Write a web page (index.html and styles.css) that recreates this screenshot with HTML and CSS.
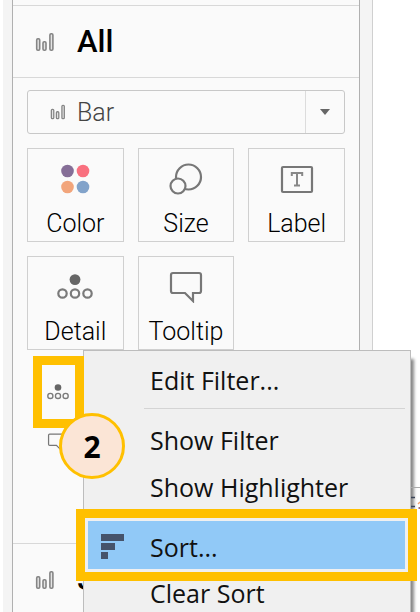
FILE: index.html
```html
<!DOCTYPE html>
<html lang="en">
<head>
<meta charset="utf-8">
<title>Marks</title>
<link rel="stylesheet" href="styles.css">
</head>
<body>
<svg class="defs" aria-hidden="true">
  <symbol id="bars" viewBox="0 0 20 20">
    <g fill="#e4e4e4" stroke="#858585" stroke-width="1.6">
      <rect x="1.7" y="6.7" width="3" height="11.6" rx="1.2"/>
      <rect x="8" y="9.7" width="3" height="8.6" rx="1.2"/>
      <rect x="14.9" y="1.7" width="3" height="16.6" rx="1.2"/>
    </g>
  </symbol>
  <symbol id="detail" viewBox="0 0 36 26">
    <circle cx="18" cy="5.6" r="5.4" fill="#666"/>
    <g fill="none" stroke="#7a7a7a" stroke-width="2.2">
      <circle cx="5.5" cy="19.5" r="4.2"/><circle cx="18" cy="19.5" r="4.2"/><circle cx="30.5" cy="19.5" r="4.2"/>
    </g>
  </symbol>
  <symbol id="tooltip" viewBox="0 0 34 32">
    <path d="M4 2H30Q32 2 32 4V20Q32 22 30 22H24V30L16 22H4Q2 22 2 20V4Q2 2 4 2Z" fill="none" stroke="#777" stroke-width="2.2"/>
  </symbol>
</svg>
<main class="shelf">
  <section class="card">
    <div class="strip"></div>
    <h2 class="heading"><svg class="bars"><use href="#bars"/></svg>All</h2>
    <div class="body">
      <div class="picker">
        <svg class="bars small"><use href="#bars"/></svg>
        <select aria-label="Mark type"><option>Bar</option></select>
        <svg class="arrow" viewBox="0 0 10 6"><path d="M0 0H10L5 6Z" fill="#666"/></svg>
      </div>
      <div class="tiles">
        <button class="tile" type="button">
          <svg viewBox="0 0 36 32"><circle cx="10.5" cy="8" r="6.3" fill="#856e97"/><circle cx="26" cy="8" r="6.3" fill="#f9707f"/><circle cx="10.5" cy="24" r="6.3" fill="#f2a57b"/><circle cx="26" cy="24" r="6.3" fill="#82a3ca"/></svg>
          Color
        </button>
        <button class="tile" type="button">
          <svg viewBox="0 0 36 32"><g fill="#fafafa" stroke="#777" stroke-width="2.2"><circle cx="20.5" cy="14" r="12.5"/><circle cx="10" cy="23" r="7.5"/></g></svg>
          Size
        </button>
        <button class="tile" type="button">
          <svg viewBox="0 0 36 32"><rect x="3" y="4" width="30" height="25" rx="1" fill="none" stroke="#777" stroke-width="2.2"/><path d="M12.8 13V10H23.200V13M18 10V22M15 22.500H21" fill="none" stroke="#888" stroke-width="2"/></svg>
          Label
        </button>
        <button class="tile" type="button">
          <svg viewBox="0 0 36 32"><use href="#detail" y="3" width="36" height="26"/></svg>
          Detail
        </button>
        <button class="tile" type="button">
          <svg viewBox="0 0 36 32"><use href="#tooltip" x="1" width="34" height="32"/></svg>
          Tooltip
        </button>
      </div>
      <div class="marks">
        <div class="mark"><svg class="dots"><use href="#detail"/></svg></div>
        <div class="mark"><svg class="bubble"><use href="#tooltip"/></svg></div>
      </div>
    </div>
    <h2 class="heading"><svg class="bars"><use href="#bars"/></svg>S</h2>
  </section>
</main>
<div class="menu" role="menu">
  <button role="menuitem" type="button">Edit Filter...</button>
  <hr>
  <button role="menuitem" type="button">Show Filter</button>
  <button role="menuitem" type="button">Show Highlighter</button>
  <button class="active" role="menuitem" type="button"><svg class="sort" viewBox="0 0 24 26"><path d="M0 0H23V7H0ZM0 9H14V16H0ZM0 18H7V25H0Z" fill="#45536b"/></svg>Sort...</button>
  <button role="menuitem" type="button">Clear Sort</button>
</div>
<svg class="peek" viewBox="0 0 9 24" aria-hidden="true">
  <path d="M0 2.5H9" stroke="#aaa"/>
  <path d="M0 12.500H4M0 21.500H4" stroke="#3d4658" stroke-width="1.500"/>
  <path d="M7 19L9 17" stroke="#f0a070" stroke-width="1.500"/>
  <path d="M7.500 22H9V24H7.500Z" fill="#a06a70"/>
</svg>
<div class="frame"></div>
<div class="step">2</div>
</body>
</html>
```
FILE: styles.css
```css
* { box-sizing: border-box; }
html { overflow: hidden; }
body {
  position: relative;
  margin: 0;
  min-height: 100vh;
  overflow: hidden;
  background: #fff;
  color: #111;
  font-family: Roboto, sans-serif;
}
.defs { display: none; }
button, select { font: inherit; color: inherit; border: 0; background: none; }
svg { flex: none; }

.shelf {
  display: flex;
  margin: 0 47px 0 3px;
  padding: 0 12px 0 9px;
  height: 100vh;
  background: #f4f4f4;
  border-right: 1px solid #d0d0d0;
}
.card {
  flex: 1;
  background: #fafafa;
  border: solid #b0b0b0;
  border-width: 0 1px;
}
.strip { height: 5px; }
.heading {
  display: flex;
  align-items: center;
  gap: 22px;
  height: 73px;
  margin: 0;
  padding-left: 22px;
  border: solid #d8d8d8;
  border-width: 1px 0;
  color: #000;
  font-size: 31px;
  font-weight: 500;
}
.bars { width: 20px; height: 20px; }
.bars.small { width: 16px; height: 16px; margin-left: 22px; }
.body { height: 465px; padding: 12px 14px 0; }
.picker {
  display: flex;
  align-items: center;
  height: 44px;
  border: 1px solid #c8c8c8;
  border-radius: 3px;
  color: #444;
  font-size: 25px;
  font-weight: 300;
}
.picker select {
  flex: 1;
  height: 100%;
  padding: 0 0 0 11px;
  appearance: none;
}
.arrow {
  box-sizing: content-box;
  width: 10px;
  height: 6px;
  padding: 18px 14px;
  border-left: 1px solid #dcdcdc;
}
.tiles {
  display: grid;
  grid-template-columns: repeat(3, 1fr);
  gap: 14px;
  margin-top: 14px;
}
.tile {
  display: flex;
  flex-direction: column;
  align-items: center;
  gap: 13px;
  height: 94px;
  padding: 14px 0 0;
  border: 1px solid #d0d0d0;
  color: #000;
  font-size: 25px;
  font-weight: 300;
  line-height: 32px;
}
.tile svg { width: 36px; height: 32px; }
.marks { padding: 17px 0 0 20px; }
.mark { display: flex; align-items: center; height: 50px; }
.dots { width: 22px; height: 16px; }
.bubble { width: 20px; height: 18px; }

.menu {
  position: absolute;
  top: 350px;
  left: 83px;
  right: 9px;
  padding: 5px 5px 0 4px;
  height: 290px;
  background: #f0f0f0;
  border: 1px solid #bdbdbd;
  box-shadow: 4px 8px 3px -1px #888;
  font-family: "Open Sans", sans-serif;
}
.menu button {
  display: flex;
  align-items: center;
  width: 100%;
  height: 47px;
  padding: 0 0 0 62px;
  font-size: 25px;
}
.menu hr {
  height: 1px;
  margin: 5px 0 7px 56px;
  border: 0;
  background: #d4d4d4;
}
.menu .active {
  position: relative;
  height: 48px;
  margin: 11px 0 0;
  padding: 3px 0 0 13px;
  background: #91c9f7;
  outline: 9px solid #ffc000;
  outline-offset: 3px;
}
.sort { width: 24px; height: 26px; margin-right: 25px; }
.peek {
  position: absolute;
  top: 485px;
  right: 0;
  width: 9px;
  height: 24px;
}
.frame {
  position: absolute;
  top: 356px;
  left: 33px;
  width: 51px;
  height: 72px;
  border: 9px solid #ffc000;
}
.step {
  position: absolute;
  top: 413px;
  left: 59px;
  display: grid;
  place-items: center;
  width: 66px;
  height: 66px;
  border: 3px solid #ffc000;
  border-radius: 50%;
  background: #fbe5d6;
  color: #000;
  font: 700 30px "Open Sans", sans-serif;
}
```
